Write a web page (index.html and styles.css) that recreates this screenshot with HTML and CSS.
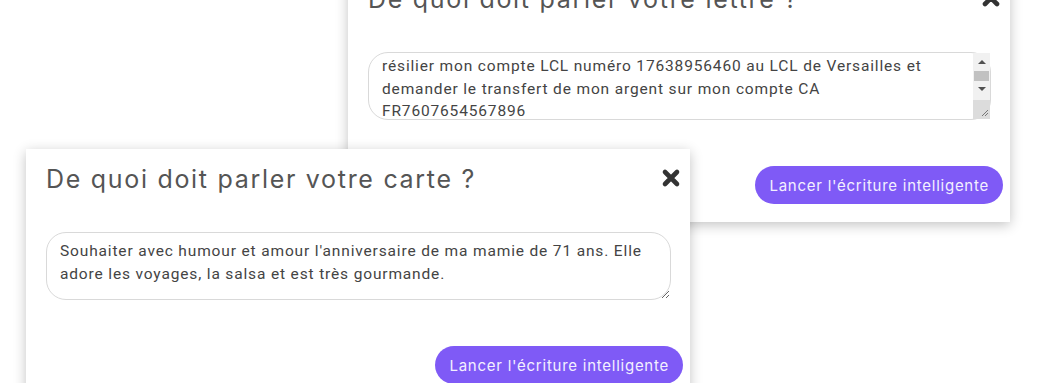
FILE: index.html
```html
<!DOCTYPE html>
<html lang="fr">
<head>
    <meta charset="UTF-8">
    <title>Écriture intelligente</title>
    <link rel="stylesheet" href="styles.css">
</head>
<body>
    <div class="desk">
        <div class="modal modal-back">
            <div class="modal-head">
                <h2>De quoi doit parler votre lettre ?</h2>
                <button class="close" aria-label="Fermer">
                    <svg viewBox="0 0 20 20" width="20" height="20"><path d="M4 4 L16 16 M16 4 L4 16"/></svg>
                </button>
            </div>
            <div class="field field-scroll">
                <textarea id="letter-text" rows="3">résilier mon compte LCL numéro 17638956460 au LCL de Versailles et demander le transfert de mon argent sur mon compte CA FR7607654567896
dans les plus brefs délais, en précisant la date de clôture souhaitée et en demandant la confirmation écrite de la fermeture du compte ainsi que le relevé final.</textarea>
                <div class="scrollbar">
                    <span class="arrow arrow-up"></span>
                    <span class="thumb"></span>
                    <span class="arrow arrow-down"></span>
                    <span class="resizer">
                        <svg viewBox="0 0 18 18" width="18" height="18"><path d="M15 9 L9 15 M15 12 L12 15"/></svg>
                    </span>
                </div>
            </div>
            <div class="modal-foot">
                <button class="write-btn">Lancer l'écriture intelligente</button>
            </div>
        </div>

        <div class="modal modal-front">
            <div class="modal-head">
                <h2>De quoi doit parler votre carte ?</h2>
                <button class="close" aria-label="Fermer">
                    <svg viewBox="0 0 20 20" width="20" height="20"><path d="M4 4 L16 16 M16 4 L4 16"/></svg>
                </button>
            </div>
            <div class="field">
                <textarea rows="2">Souhaiter avec humour et amour l'anniversaire de ma mamie de 71 ans. Elle adore les voyages, la salsa et est très gourmande.</textarea>
            </div>
            <div class="modal-foot">
                <button class="write-btn">Lancer l'écriture intelligente</button>
            </div>
        </div>
    </div>

    <script>
        // le texte de la lettre est légèrement défilé
        document.getElementById("letter-text").scrollTop = 5;
    </script>
</body>
</html>
```

FILE: styles.css
```css
body {
    margin: 0;
    background: #fff;
    font-family: 'Inter', 'Liberation Sans', sans-serif;
    overflow: hidden;
}
.desk {
    position: relative;
    width: 1040px;
    height: 383px;
    overflow: hidden;
}
.modal {
    position: absolute;
    width: 664px;
    background: #fff;
    box-shadow: 0 3px 12px rgba(0, 0, 0, 0.24);
    padding: 0 0 18px 0;
    box-sizing: border-box;
}
.modal-back {
    left: 348px;
    top: -31px;
    width: 662px;
}
.modal-front {
    left: 26px;
    top: 149px;
}
.modal-head {
    display: flex;
    align-items: center;
    justify-content: space-between;
    padding: 15px 9px 0 20px;
    height: 30px;
}
.modal-head h2 {
    margin: 0;
    font-weight: 400;
    font-size: 25px;
    color: #555;
    letter-spacing: 1.7px;
}
.close {
    background: none;
    border: none;
    padding: 0;
    width: 20px;
    height: 20px;
    margin-top: -2px;
    cursor: pointer;
}
.close svg path {
    stroke: #333;
    stroke-width: 4.6;
    stroke-linecap: round;
    fill: none;
}
.field {
    position: relative;
    margin: 38px 19px 0 20px;
}
textarea {
    display: block;
    box-sizing: border-box;
    width: 100%;
    height: 68px;
    padding: 7px 13px;
    border: 1px solid #d9d9d9;
    border-radius: 20px;
    font-family: 'Roboto', 'Liberation Sans', sans-serif;
    font-size: 15.5px;
    letter-spacing: 0.85px;
    line-height: 22.5px;
    color: #444;
    resize: vertical;
    outline: none;
}
.field-scroll textarea {
    overflow: hidden;
    resize: none;
    padding-right: 40px;
}
.scrollbar {
    position: absolute;
    top: 1px;
    right: 1px;
    bottom: 1px;
    width: 17px;
    background: #f1f1f1;
    display: flex;
    flex-direction: column;
    align-items: center;
}
.arrow {
    width: 0;
    height: 0;
    border-left: 4px solid transparent;
    border-right: 4px solid transparent;
}
.arrow-up {
    margin-top: 7px;
    border-bottom: 4px solid #505050;
}
.thumb {
    width: 15px;
    height: 10px;
    margin-top: 7px;
    background: #c1c1c1;
}
.arrow-down {
    margin-top: 6px;
    border-top: 4px solid #505050;
}
.resizer {
    margin-top: auto;
    width: 17px;
    height: 19px;
    background: #dcdcdc;
}
.resizer svg {
    display: block;
    margin: 1px 0 0 0;
}
.resizer svg path {
    stroke: #777;
    stroke-width: 1;
    fill: none;
}
.modal-foot {
    display: flex;
    justify-content: flex-end;
    padding: 46px 7px 0 0;
}
.write-btn {
    height: 38px;
    padding: 0 14px;
    border: none;
    border-radius: 19px;
    background: #7f5af6;
    color: #f3f0ff;
    font-family: 'Inter', 'Liberation Sans', sans-serif;
    font-size: 15px;
    letter-spacing: 0.75px;
    cursor: pointer;
}
```
